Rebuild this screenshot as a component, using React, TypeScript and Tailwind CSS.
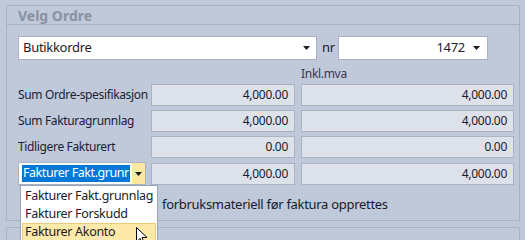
import React from "react";

const Arrow = () => (
  <svg width="7" height="4" viewBox="0 0 7 4"><path d="M0 0h7L3.5 4z" fill="#1e1e1e" /></svg>
);

const Field = ({ v, w }: { v: string; w: string }) => (
  <div className={`${w} h-[22px] bg-[#dce1ea] border border-[#a9b3c3] flex items-center justify-end pr-[6px] text-[12px] tracking-[-0.3px] text-[#1b1b2b]`}>
    {v}
  </div>
);

export default function App() {
  const rows = [
    ["Sum Ordre-spesifikasjon", "4,000.00", "4,000.00"],
    ["Sum Fakturagrunnlag", "4,000.00", "4,000.00"],
    ["Tidligere Fakturert", "0.00", "0.00"],
  ];
  return (
    <div className="w-[525px] h-[240px] bg-[#bfc9d9] overflow-hidden relative pt-[5px] pl-[6px] tracking-[-0.3px]" style={{ fontFamily: '"Noto Sans", sans-serif' }}>
      <div className="w-[514px] h-[216px] border border-[#a6b1c1] rounded-t-[2px] flex flex-col">
        <div className="h-[19px] border-b border-[#a6b1c1] pl-[11px] flex items-center text-[14px] font-bold text-[#8892a4] tracking-normal">Velg Ordre</div>
        <div className="pl-[11px] pt-[11px] flex flex-col">
          <div className="flex items-center h-[24px]">
            <div className="w-[299px] h-[24px] bg-white border border-[#a9b3c3] flex items-center pl-[4px] pr-[6px] text-[13px] text-[#1b1b2b]">
              <span className="flex-1">Butikkordre</span>
              <Arrow />
            </div>
            <span className="ml-[5px] w-[16px] text-[13px] text-[#1b1b2b]">nr</span>
            <div className="w-[150px] h-[24px] bg-white border border-[#a9b3c3] flex items-center justify-end pr-[7px] text-[13px] text-[#1b1b2b]">
              <span className="mr-[8px]">1472</span>
              <Arrow />
            </div>
          </div>
          <div className="ml-[283px] mt-[5px] h-[18px] text-[12px] text-[#3b3656] flex items-center">Inkl.mva</div>
          <div className="flex flex-col gap-[4px] mt-[1px]">
            {rows.map(([l, a, b]) => (
              <div key={l} className="flex items-center">
                <div className="w-[133px] text-[12px] tracking-[-0.35px] text-[#1b2233] whitespace-nowrap">{l}</div>
                <Field v={a} w="w-[144px]" />
                <div className="w-[6px]" />
                <Field v={b} w="w-[213px]" />
              </div>
            ))}
            <div className="flex items-center">
              <div className="w-[128px] h-[23px] bg-white border border-[#a9b3c3] flex items-center pl-[3px] text-[12.5px] tracking-[-0.45px]">
                <span className="bg-[#0078d7] text-white h-[17px] flex items-center pl-[1px] pr-[1px] whitespace-nowrap">Fakturer Fakt.grunr</span>
                <div className="ml-auto w-[13px] h-full bg-[#fde7a5] flex items-center justify-center"><Arrow /></div>
              </div>
              <div className="w-[5px]" />
              <Field v="4,000.00" w="w-[144px]" />
              <div className="w-[6px]" />
              <Field v="4,000.00" w="w-[213px]" />
            </div>
          </div>
          <div className="ml-[144px] mt-[10px] text-[13px] text-[#1b1b2b] whitespace-nowrap">forbruksmateriell før faktura opprettes</div>
        </div>
      </div>
      <div className="mt-[6px] w-[514px] h-[20px] border border-[#a6b1c1] rounded-t-[2px]" />
      <div className="absolute left-[20px] top-[185px] w-[138px] h-[60px] bg-white border border-[#9aa4b4] text-[12.5px] text-[#1b1b2b] flex flex-col pt-[1px] px-[1px]">
        <div className="h-[18px] flex items-center pl-[3px] whitespace-nowrap">Fakturer Fakt.grunnlag</div>
        <div className="h-[18px] flex items-center pl-[3px]">Fakturer Forskudd</div>
        <div className="h-[19px] flex items-center pl-[2px] bg-[#fde9aa] border border-[#ebcb78]">Fakturer Akonto</div>
      </div>
      <svg className="absolute left-[136px] top-[227px]" width="12" height="18" viewBox="0 0 12 18">
        <path d="M0.5 0.5 L0.5 15 L4 11.5 L6.5 17 L8.5 16 L6 10.5 L11 10.5 Z" fill="#fff" stroke="#000" strokeWidth="1" />
      </svg>
    </div>
  );
}
